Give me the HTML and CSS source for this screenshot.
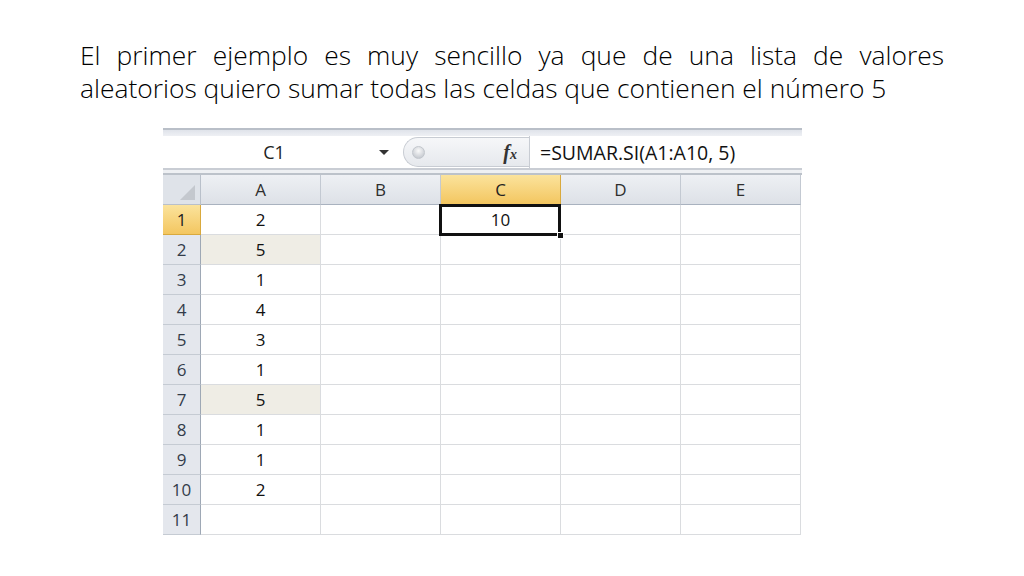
FILE: index.html
```html
<!DOCTYPE html>
<html lang="es">
<head>
<meta charset="utf-8">
<title>SUMAR.SI</title>
<link rel="stylesheet" href="styles.css">
</head>
<body>
<div class="slide">
  <div class="title">
    <div class="line first">El primer ejemplo es muy sencillo ya que de una lista de valores</div>
    <div class="line">aleatorios quiero sumar todas las celdas que contienen el número 5</div>
  </div>

  <div class="excel">
    <div class="ribbon-edge"></div>
    <div class="formula-bar">
      <div class="name-box">
        <span class="name">C1</span>
        <span class="drop"></span>
      </div>
      <div class="pill">
        <span class="knob"></span>
        <span class="fx">f<span class="x">x</span></span>
      </div>
      <div class="formula">=SUMAR.SI(A1:A10, 5)</div>
    </div>
    <div class="bar-gap"></div>
    <div class="grid">
      <div class="corner"><span class="tri"></span></div>
      <div class="ch">A</div>
      <div class="ch">B</div>
      <div class="ch sel">C</div>
      <div class="ch">D</div>
      <div class="ch">E</div>

      <div class="rh sel">1</div><div class="c">2</div><div class="c"></div><div class="c active"><span class="v">10</span><span class="frame"></span><span class="handle"></span></div><div class="c"></div><div class="c"></div>
      <div class="rh">2</div><div class="c hi">5</div><div class="c"></div><div class="c"></div><div class="c"></div><div class="c"></div>
      <div class="rh">3</div><div class="c">1</div><div class="c"></div><div class="c"></div><div class="c"></div><div class="c"></div>
      <div class="rh">4</div><div class="c">4</div><div class="c"></div><div class="c"></div><div class="c"></div><div class="c"></div>
      <div class="rh">5</div><div class="c">3</div><div class="c"></div><div class="c"></div><div class="c"></div><div class="c"></div>
      <div class="rh">6</div><div class="c">1</div><div class="c"></div><div class="c"></div><div class="c"></div><div class="c"></div>
      <div class="rh">7</div><div class="c hi">5</div><div class="c"></div><div class="c"></div><div class="c"></div><div class="c"></div>
      <div class="rh">8</div><div class="c">1</div><div class="c"></div><div class="c"></div><div class="c"></div><div class="c"></div>
      <div class="rh">9</div><div class="c">1</div><div class="c"></div><div class="c"></div><div class="c"></div><div class="c"></div>
      <div class="rh">10</div><div class="c">2</div><div class="c"></div><div class="c"></div><div class="c"></div><div class="c"></div>
      <div class="rh">11</div><div class="c"></div><div class="c"></div><div class="c"></div><div class="c"></div><div class="c"></div>
    </div>
  </div>
</div>
</body>
</html>
```
FILE: styles.css
```css
* { box-sizing: border-box; }
html, body { margin: 0; padding: 0; background: #fff; }
.slide {
  width: 1024px;
  height: 576px;
  padding: 39px 0 0 80px;
  overflow: hidden;
}
.title {
  width: 864px;
  font-family: "Open Sans", "Noto Sans", sans-serif;
  font-weight: 300;
  font-size: 26.4px;
  line-height: 33px;
  color: #000;
}
.line { white-space: nowrap; }
.line.first { text-align: justify; text-align-last: justify; white-space: normal; }

.excel {
  width: 639px;
  margin: 23px 0 0 83px;
  font-family: "Open Sans", "Noto Sans", sans-serif;
}
.ribbon-edge {
  height: 8px;
  border-top: 2px solid #b9bfc8;
  background: linear-gradient(#dfe3ea, #eef0f4);
}
.formula-bar {
  display: flex;
  height: 32px;
  background: #fff;
}
.name-box {
  width: 240px;
  display: flex;
  align-items: center;
}
.name {
  flex: 1;
  text-align: center;
  font-size: 18px;
  color: #222;
  padding-left: 6px;
}
.drop {
  width: 0; height: 0;
  border-left: 5px solid transparent;
  border-right: 5px solid transparent;
  border-top: 5px solid #333;
  margin-right: 14px;
}
.pill {
  width: 126px;
  height: 30px;
  margin-top: 1px;
  border-radius: 15px 0 0 15px;
  background: linear-gradient(#f6f7f9, #e6e9ed);
  border: 1px solid #c8ccd3;
  border-right: none;
  display: flex;
  align-items: center;
  justify-content: space-between;
  padding: 0 12px 0 8px;
}
.knob {
  width: 13px; height: 13px;
  border-radius: 50%;
  background: radial-gradient(circle at 50% 35%, #fafafa, #b9bec6);
  border: 1px solid #c2c6cc;
}
.fx {
  font-family: "Liberation Serif", "DejaVu Serif", serif;
  font-style: italic;
  font-weight: bold;
  font-size: 20px;
  color: #333;
}
.fx .x { font-size: 14px; }
.formula {
  flex: 1;
  border-left: 1px solid #c8ccd3;
  padding-left: 10px;
  display: flex;
  align-items: center;
  font-size: 19.5px;
  color: #111;
}
.bar-gap {
  height: 7px;
  border-top: 2px solid #c9cdd4;
  border-bottom: 2px solid #bcc2ca;
  background: #eef0f3;
}
.grid {
  display: grid;
  grid-template-columns: 38px repeat(5, 120px);
  grid-auto-rows: 30px;
  width: 638px;
  font-family: "Open Sans", "Noto Sans", sans-serif;
  font-size: 17px;
}
.corner, .ch, .rh, .c {
  display: flex;
  align-items: center;
  justify-content: center;
}
.corner {
  background: #dfe3e9;
  border-right: 1px solid #b9c0ca;
  border-bottom: 1px solid #b9c0ca;
  position: relative;
}
.tri {
  position: absolute;
  right: 5px;
  bottom: 4px;
  width: 0; height: 0;
  border-left: 15px solid transparent;
  border-bottom: 15px solid #c4c8ce;
}
.ch {
  background: linear-gradient(#eef0f4, #dde1e7);
  border-right: 1px solid #c3c9d2;
  border-bottom: 1px solid #a9b2bf;
  color: #2e2e2e;
}
.ch.sel, .rh.sel {
  background: linear-gradient(#fbe39c, #f3c660);
  border-right-color: #d9a93d;
  border-bottom-color: #d9a93d;
  color: #222;
}
.rh {
  background: #e4e7ed;
  border-right: 1px solid #9ea8b5;
  border-bottom: 1px solid #c5cbd3;
  color: #333c4a;
}
.c {
  background: #fff;
  border-right: 1px solid #dadcdf;
  border-bottom: 1px solid #dadcdf;
  color: #111;
  font-weight: 500;
}
.c.hi { background: #efede5; }
.c.active { position: relative; }
.frame {
  position: absolute;
  left: -2px; top: -1px; right: -1px; bottom: -2px;
  border: 3px solid #111;
}
.handle {
  position: absolute;
  right: -4px;
  bottom: -5px;
  width: 7px; height: 7px;
  background: #111;
  border: 1px solid #fff;
}
```
